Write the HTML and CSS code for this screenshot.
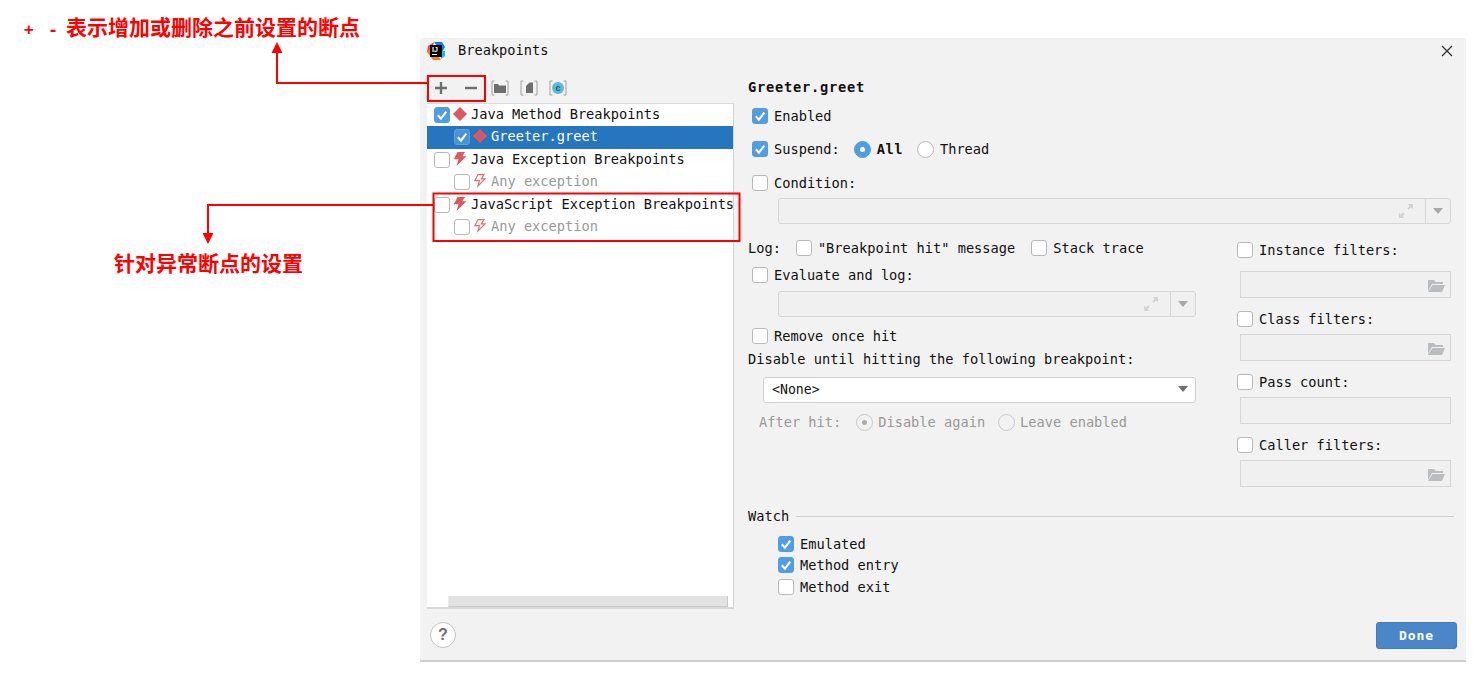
FILE: index.html
```html
<!DOCTYPE html>
<html lang="zh">
<head>
<meta charset="utf-8">
<title>Breakpoints</title>
<link rel="stylesheet" href="styles.css">
</head>
<body>
<svg class="defs" width="0" height="0" aria-hidden="true">
  <symbol id="check" viewBox="0 0 16 16"><path d="M3.8 8.300 6.900 11.600 12.300 4.600" fill="none" stroke="#fff" stroke-width="2"/></symbol>
  <symbol id="diamond" viewBox="0 0 14 14"><path d="M7 0 14 7 7 14 0 7Z" fill="#db5860"/></symbol>
  <symbol id="bolt" viewBox="0 0 14 14"><path d="M4.500 0H12L9.300 4.300H13.500L3.500 14 5.600 7.300H.8Z" fill="#db5860"/></symbol>
  <symbol id="bolt-off" viewBox="0 0 14 14"><path d="M4.900 .6H11L8.300 4.900H12.100L4.900 12 6.400 6.700H1.900Z" fill="#fff" stroke="#e26e76" stroke-width="1.200"/></symbol>
  <symbol id="expand" viewBox="0 0 16 16"><path d="M9.500 1h5.500v5.500l-2-2-2.200 2.200-1.500-1.500 2.200-2.200ZM6.500 15H1V9.500l2 2 2.200-2.200 1.500 1.500-2.200 2.200Z" fill="#d3d3d3"/></symbol>
  <symbol id="folder" viewBox="0 0 18 14"><path d="M1 1h6l1.500 2H16v2H5L1 12Z" fill="#b9bdc0"/><path d="M5.500 6H18l-3 7H1Z" fill="#b9bdc0"/></symbol>
</svg>

<main class="dialog">
  <header class="titlebar">
    <svg class="logo" viewBox="0 0 18 18" width="18" height="18">
      <path d="M1 4 7 0 5 9 0 10Z" fill="#fc3a72"/>
      <path d="M7 0h8l3 5-3 5Z" fill="#087cfa"/>
      <path d="M0 10l6 8h8l-9-13Z" fill="#fe7c1c"/>
      <path d="M14 9h4v5l-4 3Z" fill="#07c3f2"/>
      <rect x="3" y="3" width="12" height="12" fill="#000"/>
      <text x="5" y="10" class="logo-text">IJ</text>
      <rect x="5" y="12" width="5" height="1" fill="#fff"/>
    </svg>
    <span class="title">Breakpoints</span>
    <svg class="close" viewBox="0 0 12 12" width="12" height="12"><path d="M1 1 11 11M11 1 1 11" stroke="#333" stroke-width="1.300" fill="none"/></svg>
  </header>

  <div class="content">
    <section class="left">
      <div class="toolbar">
        <svg class="tool tool-plus" viewBox="0 0 14 14" width="14" height="14"><path d="M7 1v12M1 7h12" stroke="#6e6e6e" stroke-width="2.400" fill="none"/></svg>
        <svg class="tool tool-minus" viewBox="0 0 14 14" width="14" height="14"><path d="M1 7h12" stroke="#6e6e6e" stroke-width="2.400" fill="none"/></svg>
        <svg class="tool tool-group" viewBox="0 0 18 16" width="18" height="16"><path d="M3.500 1H1v14h2.500M14.500 1H17v14h-2.500" stroke="#a0a0a0" fill="none"/><path d="M3 4h4l1 1.500h7V13H3Z" fill="#6e6e6e"/></svg>
        <svg class="tool tool-group" viewBox="0 0 18 16" width="18" height="16"><path d="M3.500 1H1v14h2.500M14.500 1H17v14h-2.500" stroke="#a0a0a0" fill="none"/><path d="M6 6 9.500 2.500H13V13H6Z" fill="#6e6e6e"/></svg>
        <svg class="tool tool-group" viewBox="0 0 18 16" width="18" height="16"><path d="M3.500 1H1v14h2.500M14.500 1H17v14h-2.500" stroke="#a0a0a0" fill="none"/><circle cx="9" cy="8" r="6" fill="#5fb8d8"/><text x="9" y="11" class="class-c">c</text></svg>
      </div>
      <div class="tree">
        <div class="node"><span class="cb on"><svg><use href="#check"/></svg></span><svg class="node-icon"><use href="#diamond"/></svg><span class="node-text">Java Method Breakpoints</span></div>
        <div class="node child selected"><span class="cb on"><svg><use href="#check"/></svg></span><svg class="node-icon"><use href="#diamond"/></svg><span class="node-text">Greeter.greet</span></div>
        <div class="node"><span class="cb"></span><svg class="node-icon"><use href="#bolt"/></svg><span class="node-text">Java Exception Breakpoints</span></div>
        <div class="node child muted"><span class="cb"></span><svg class="node-icon"><use href="#bolt-off"/></svg><span class="node-text">Any exception</span></div>
        <div class="node"><span class="cb"></span><svg class="node-icon"><use href="#bolt"/></svg><span class="node-text">JavaScript Exception Breakpoints</span></div>
        <div class="node child muted"><span class="cb"></span><svg class="node-icon"><use href="#bolt-off"/></svg><span class="node-text">Any exception</span></div>
        <div class="scrollbar"></div>
      </div>
    </section>

    <section class="right">
      <h1 class="bp-name">Greeter.greet</h1>
      <div class="row r-enabled indent"><span class="cb on"><svg><use href="#check"/></svg></span><span>Enabled</span></div>
      <div class="row r-suspend indent">
        <span class="cb on"><svg><use href="#check"/></svg></span><span>Suspend:</span>
        <span class="radio on r-all"></span><b class="all">All</b>
        <span class="radio r-thread"></span><span>Thread</span>
      </div>
      <div class="row r-condition indent"><span class="cb"></span><span>Condition:</span></div>
      <div class="field field-wide">
        <svg class="expand"><use href="#expand"/></svg><span class="drop"><i class="arrow"></i></span>
      </div>

      <div class="columns">
        <div class="col-main">
          <div class="row r-log">
            <span class="log-label">Log:</span>
            <span class="cb"></span><span class="msg-label">"Breakpoint hit" message</span>
            <span class="cb"></span><span>Stack trace</span>
          </div>
          <div class="row r-eval indent"><span class="cb"></span><span>Evaluate and log:</span></div>
          <div class="field field-log">
            <svg class="expand"><use href="#expand"/></svg><span class="drop"><i class="arrow"></i></span>
          </div>
          <div class="row r-remove indent"><span class="cb"></span><span>Remove once hit</span></div>
          <div class="row r-disable">Disable until hitting the following breakpoint:</div>
          <div class="combo"><span>&lt;None&gt;</span><i class="arrow dark"></i></div>
          <div class="row r-after muted-row">
            <span class="after-label">After hit:</span>
            <span class="radio off-sel"></span><span class="again">Disable again</span>
            <span class="radio off"></span><span>Leave enabled</span>
          </div>
        </div>
        <div class="col-side">
          <div class="row s-first"><span class="cb"></span><span>Instance filters:</span></div>
          <div class="s-input s-tall"><svg class="folder"><use href="#folder"/></svg></div>
          <div class="row s-next"><span class="cb"></span><span>Class filters:</span></div>
          <div class="s-input"><svg class="folder"><use href="#folder"/></svg></div>
          <div class="row s-next"><span class="cb"></span><span>Pass count:</span></div>
          <div class="s-input"></div>
          <div class="row s-next"><span class="cb"></span><span>Caller filters:</span></div>
          <div class="s-input"><svg class="folder"><use href="#folder"/></svg></div>
        </div>
      </div>

      <div class="watch-head"><span>Watch</span><hr></div>
      <div class="watch-list">
        <div class="row w-row"><span class="cb on"><svg><use href="#check"/></svg></span><span>Emulated</span></div>
        <div class="row w-row"><span class="cb on"><svg><use href="#check"/></svg></span><span>Method entry</span></div>
        <div class="row w-row"><span class="cb"></span><span>Method exit</span></div>
      </div>
    </section>
  </div>

  <footer class="footer">
    <span class="help">?</span>
    <span class="done">Done</span>
  </footer>
</main>

<svg class="overlay" width="1476" height="677" aria-hidden="true">
  <rect x="428" y="76" width="57" height="25" class="mark"/>
  <rect x="433.500" y="193.500" width="306" height="47.500" class="mark"/>
  <path d="M427 83H277V50" class="mark"/>
  <path d="M277 42l-5.500 11h11Z" fill="#f00"/>
  <path d="M433 205H208V235" class="mark"/>
  <path d="M208 244l-5.500-11h11Z" fill="#f00"/>
</svg>
<p class="note note-top"><span class="signs">+ -</span>表示增加或删除之前设置的断点</p>
<p class="note note-side">针对异常断点的设置</p>
</body>
</html>
```
FILE: styles.css
```css
* { box-sizing: border-box; }
html, body { margin: 0; padding: 0; background: #fff; }
body {
  width: 1476px;
  height: 677px;
  overflow: hidden;
  position: relative;
  font-family: "DejaVu Sans Mono", "Liberation Mono", monospace;
  font-size: 13.66px;
  color: #111;
}
.defs { position: absolute; }

.dialog {
  position: absolute;
  left: 420px;
  top: 38px;
  width: 1046px;
  height: 624px;
  background: #f2f2f2;
  border-bottom: 2px solid #cdcdcd;
  display: flex;
  flex-direction: column;
}
.titlebar {
  height: 38px;
  flex: none;
  display: flex;
  align-items: flex-start;
  padding: 4px 13px 0 7px;
}
.logo { flex: none; }
.logo-text { font: bold 7px "Liberation Sans", sans-serif; fill: #fff; }
.title { margin-left: 13px; line-height: 17px; }
.close { margin-left: auto; margin-top: 3px; }

.content { display: flex; flex: none; height: 533px; padding-left: 7px; }

.left { width: 307px; flex: none; display: flex; flex-direction: column; }
.toolbar { height: 27px; flex: none; display: flex; align-items: center; padding: 0 0 3px 7px; }
.tool-minus { margin-left: 16px; }
.tool-group { margin-left: 11px; }
.tool-minus + .tool-group { margin-left: 13px; }
.class-c { font: bold 9px "Liberation Sans", sans-serif; fill: #1d5d7a; text-anchor: middle; }

.tree {
  height: 506px;
  background: #fff;
  border-top: 1px solid #dcdcdc;
  border-right: 1px solid #d4d4d4;
  border-bottom: 2px solid #d8d8d8;
  position: relative;
}
.node {
  height: 22.5px;
  display: flex;
  align-items: center;
  padding-left: 7px;
  white-space: nowrap;
}
.node:first-child { height: 22px; }
.node.child { padding-left: 27px; }
.node .cb { margin-right: 3px; }
.node-icon { width: 14px; height: 14px; flex: none; margin: 0 3px 2px 0; }
.node-text { padding: 0 0 2px 1px; }
.selected { background: #2675bf; color: #fff; }
.muted { color: #999; }
.scrollbar {
  position: absolute;
  left: 21px;
  right: 5px;
  bottom: 0;
  height: 11px;
  background: #e2e2e2;
  border-right: 1px solid #c9c9c9;
  border-bottom: 1px solid #c9c9c9;
  border-left: 1px solid #ebebeb;
}

.cb {
  width: 16px;
  height: 16px;
  flex: none;
  background: #fff;
  border: 1px solid #b8b8b8;
  border-radius: 3px;
  display: inline-block;
}
.cb.on { background: #4f9ee3; border-color: #4f9ee3; position: relative; }
.cb svg { position: absolute; left: -1px; top: -1px; width: 16px; height: 16px; }
.selected .cb.on { background: #4a94d6; border-color: #5fa3de; }

.radio {
  width: 17px;
  height: 17px;
  flex: none;
  border-radius: 50%;
  background: #fff;
  border: 1px solid #b8b8b8;
  display: inline-block;
  position: relative;
}
.radio.on { background: #4f9ee3; border-color: #4f9ee3; }
.radio.on::after, .radio.off-sel::after {
  content: "";
  position: absolute;
  left: 5px;
  top: 5px;
  width: 5px;
  height: 5px;
  border-radius: 50%;
  background: #fff;
}
.radio.off-sel, .radio.off { background: #f2f2f2; border-color: #c8c8c8; }
.radio.off-sel::after { background: #aaa; }

.right { width: 706px; flex: none; margin-left: 14px; }
.bp-name { margin: 0; height: 22px; line-height: 22px; font-size: 13.66px; font-weight: bold; letter-spacing: .78px; color: #111; }
.row { height: 22px; display: flex; align-items: center; white-space: nowrap; }
.row .cb { margin-right: 6px; }
.indent { padding-left: 4px; }
.r-enabled { margin-top: 7px; }
.r-suspend { margin-top: 11px; }
.r-condition { margin-top: 12px; }
.r-all { margin-left: 14px; margin-right: 6px; }
.all { font-weight: bold; letter-spacing: .5px; }
.r-thread { margin-left: 14px; margin-right: 6px; }

.field {
  height: 26px;
  border: 1px solid #d6d6d6;
  border-radius: 3px;
  background: #f0f0f0;
  display: flex;
  align-items: center;
  justify-content: flex-end;
}
.field-wide { width: 673px; margin: 4px 0 0 30px; }
.field-log { width: 418px; margin: 5px 0 0 30px; }
.expand { width: 16px; height: 16px; margin-right: 11px; }
.drop {
  width: 25px;
  height: 24px;
  border-left: 1px solid #d6d6d6;
  display: flex;
  align-items: center;
  justify-content: center;
}
.arrow {
  width: 0;
  height: 0;
  border-left: 5px solid transparent;
  border-right: 5px solid transparent;
  border-top: 6px solid #a8a8a8;
  display: block;
}
.arrow.dark { border-top-color: #6e6e6e; }

.columns { display: flex; }
.col-main { width: 448px; flex: none; }
.col-side { width: 217px; flex: none; margin-left: 41px; }

.r-log { margin-top: 13px; }
.log-label { margin-right: 15px; }
.msg-label { margin-right: 16px; }
.r-eval { margin-top: 5px; }
.r-remove { margin-top: 8px; }
.r-disable { margin-top: 1px; }
.combo {
  width: 433px;
  height: 26px;
  margin: 7px 0 0 15px;
  padding: 0 7px 2px 8px;
  background: #fff;
  border: 1px solid #d0d0d0;
  border-radius: 3px;
  display: flex;
  align-items: center;
  justify-content: space-between;
  font-size: 13.2px;
}
.r-after { margin-top: 8px; padding-left: 11px; color: #999; }
.after-label { margin-right: 15px; }
.r-after .radio { margin-right: 5px; }
.again { margin-right: 13px; }

.s-first { margin-top: 15px; }
.s-next { margin-top: 10px; }
.s-input {
  width: 211px;
  height: 27px;
  margin: 4px 0 0 3px;
  border: 1px solid #d6d6d6;
  background: #f0f0f0;
  display: flex;
  align-items: center;
  justify-content: flex-end;
}
.s-tall { margin-top: 10px; }
.folder { width: 18px; height: 14px; margin-right: 5px; margin-top: 2px; }

.watch-head { display: flex; align-items: center; height: 22px; margin-top: 18px; }
.watch-head hr { flex: 1; height: 1px; margin: 0 0 0 7px; border: 0; background: #d0d0d0; }
.watch-list { margin-top: 6px; padding-left: 30px; }
.w-row { height: 21.5px; }

.footer {
  flex: none;
  height: 51px;
  display: flex;
  align-items: flex-start;
  justify-content: space-between;
  padding: 13px 9px 0 10px;
}
.help {
  width: 26px;
  height: 26px;
  border-radius: 50%;
  background: #fff;
  border: 1px solid #c4c4c4;
  display: flex;
  align-items: center;
  justify-content: center;
  font: bold 16px "Liberation Sans", sans-serif;
  color: #6e6e6e;
}
.done {
  width: 81px;
  height: 27px;
  background: #4a86c8;
  border: 1px solid #3f7bbd;
  border-radius: 3px;
  color: #fff;
  font-weight: bold;
  font-size: 13px;
  letter-spacing: .9px;
  display: flex;
  align-items: center;
  justify-content: center;
}

.overlay { position: absolute; left: 0; top: 0; pointer-events: none; }
.mark { fill: none; stroke: #f00; stroke-width: 2; }
.note {
  position: absolute;
  margin: 0;
  font-family: "Noto Sans CJK SC", sans-serif;
  font-size: 21px;
  font-weight: 700;
  line-height: 28px;
  color: #f00;
  white-space: nowrap;
}
.note-top { left: 24px; top: 12px; }
.signs { font-family: "DejaVu Sans Mono", monospace; font-size: 16px; font-weight: bold; word-spacing: 5px; margin-right: 8px; }
.note-side { left: 114px; top: 248px; }
```
